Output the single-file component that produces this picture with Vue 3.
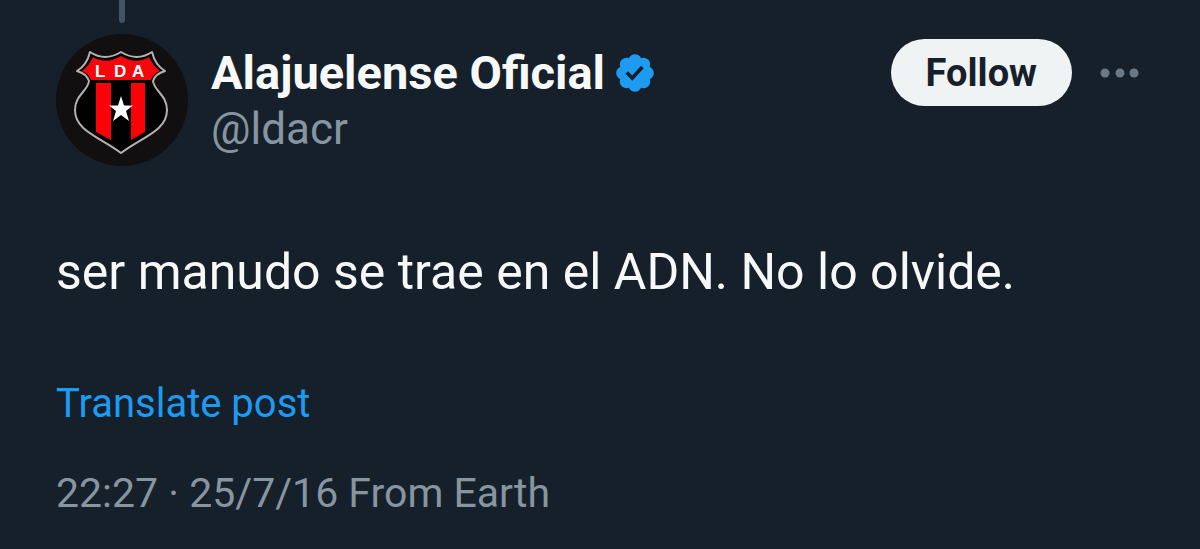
<script setup>
const post = {
  name: 'Alajuelense Oficial',
  handle: '@ldacr',
  text: 'ser manudo se trae en el ADN. No lo olvide.',
  meta: '22:27 · 25/7/16 From Earth',
}
</script>

<template>
  <article class="post">
    <span class="thread-line" aria-hidden="true"></span>
    <header class="head">
      <svg class="avatar" viewBox="0 0 132 132" role="img" aria-label="LDA crest">
        <circle cx="66" cy="66" r="66" fill="#120f10" />
        <path d="M34 18Q49 28 65 18Q81 28 96 18Q99 31 109 37Q99 40 97 47C98 57 111 61 111 76C111 97 86 103 65 119C44 103 19 97 19 76C19 61 32 57 33 47Q31 40 21 37Q31 31 34 18Z" fill="#000" />
        <path d="M37 23Q50 31 65 22Q80 31 93 23Q97 32 104 37Q97 40 95 46H35Q33 40 26 37Q33 32 37 23Z" fill="#f5060c" />
        <path d="M40 49H55V106L40 98ZM75 49H89V98L75 106Z" fill="#fb0208" />
        <path d="M34 18Q49 28 65 18Q81 28 96 18Q99 31 109 37Q99 40 97 47C98 57 111 61 111 76C111 97 86 103 65 119C44 103 19 97 19 76C19 61 32 57 33 47Q31 40 21 37Q31 31 34 18Z" fill="none" stroke="#b5b1b1" stroke-width="2" stroke-linejoin="round" />
        <path d="M65 62L68 71.500H77L70 77L73 87L65 81L57 87L60 77L53 71.500H62Z" fill="#fff" />
        <g class="crest-text">
          <text x="39" y="43">L</text>
          <text x="58" y="43">D</text>
          <text x="76" y="43">A</text>
        </g>
      </svg>
      <div class="who">
        <div class="name-row">
          <span class="name">{{ post.name }}</span>
          <svg class="badge" viewBox="0 0 22 22" role="img" aria-label="Verified account">
            <path fill="#1d9bf0" d="M20.396 11c-.018-.646-.215-1.275-.57-1.816-.354-.54-.852-.972-1.438-1.246.223-.607.27-1.264.14-1.897-.131-.634-.437-1.218-.882-1.687-.47-.445-1.053-.75-1.687-.882-.633-.13-1.29-.083-1.897.14-.273-.587-.704-1.086-1.245-1.44S11.647 1.62 11 1.604c-.646.017-1.273.213-1.813.568s-.969.854-1.24 1.44c-.608-.223-1.267-.272-1.902-.14-.635.13-1.22.436-1.69.882-.445.47-.749 1.055-.878 1.688-.13.633-.08 1.29.144 1.896-.587.274-1.087.705-1.443 1.245-.356.54-.555 1.17-.574 1.817.02.647.218 1.276.574 1.817.356.54.856.972 1.443 1.245-.224.606-.274 1.263-.144 1.896.13.634.433 1.218.877 1.688.47.443 1.054.747 1.687.878.633.132 1.29.084 1.897-.136.274.586.705 1.084 1.246 1.439.54.354 1.17.551 1.816.569.647-.016 1.276-.213 1.817-.567s.972-.854 1.245-1.44c.604.239 1.266.296 1.903.164.636-.132 1.22-.447 1.68-.907.46-.46.776-1.044.908-1.681s.075-1.299-.165-1.903c.586-.274 1.084-.705 1.439-1.246.354-.54.551-1.17.569-1.816zM9.662 14.85l-3.429-3.428 1.293-1.302 2.072 2.072 4.4-4.794 1.347 1.246z" />
          </svg>
        </div>
        <span class="handle">{{ post.handle }}</span>
      </div>
      <div class="actions">
        <button class="follow" type="button">Follow</button>
        <button class="more" type="button" aria-label="More">
          <svg viewBox="0 0 40 10" aria-hidden="true">
            <circle cx="5" cy="5" r="4.500" />
            <circle cx="20" cy="5" r="4.500" />
            <circle cx="34" cy="5" r="4.500" />
          </svg>
        </button>
      </div>
    </header>
    <p class="text">{{ post.text }}</p>
    <a class="translate" href="#">Translate post</a>
    <p class="meta">{{ post.meta }}</p>
  </article>
</template>

<style>
body {
  background: #16202a;
}
</style>

<style scoped>
.post {
  position: relative;
  padding: 34px 60px 28px 56px;
  font-family: Roboto, "Liberation Sans", sans-serif;
  color: #f7f9f9;
}
.thread-line {
  position: absolute;
  top: 0;
  left: 119px;
  width: 6px;
  height: 23px;
  border-radius: 0 0 3px 3px;
  background: #425364;
}
.head {
  display: flex;
  align-items: flex-start;
}
.avatar {
  flex: none;
  width: 132px;
  height: 132px;
}
.crest-text {
  font-family: "Liberation Sans", sans-serif;
  font-size: 17px;
  font-weight: 700;
  fill: #fff;
}
.who {
  flex: 1;
  min-width: 0;
  margin-left: 23px;
  padding-top: 11px;
}
.name-row {
  display: flex;
  align-items: center;
  gap: 8px;
  height: 56px;
}
.name {
  font-size: 47px;
  line-height: 56px;
  font-weight: 700;
  white-space: nowrap;
}
.badge {
  flex: none;
  width: 44px;
  height: 44px;
}
.handle {
  display: block;
  font-size: 44px;
  line-height: 56px;
  color: #8795a1;
}
.actions {
  display: flex;
  align-items: center;
  gap: 28px;
  padding-top: 5px;
}
.follow {
  padding: 0 35px;
  height: 67px;
  border: 0;
  border-radius: 34px;
  background: #eff3f4;
  color: #17202a;
  font-family: inherit;
  font-size: 38px;
  font-weight: 700;
}
.more {
  display: flex;
  padding: 0;
  border: 0;
  background: none;
}
.more svg {
  width: 40px;
  height: 10px;
  fill: #6b7987;
}
.text {
  margin: 74px 0 0;
  font-size: 50px;
  line-height: 64px;
}
.translate {
  display: block;
  width: fit-content;
  margin-top: 74px;
  font-size: 40px;
  line-height: 52px;
  color: #1d9bf0;
  text-decoration: none;
}
.meta {
  margin: 36px 0 0;
  font-size: 41px;
  line-height: 54px;
  color: #8795a1;
}
</style>
